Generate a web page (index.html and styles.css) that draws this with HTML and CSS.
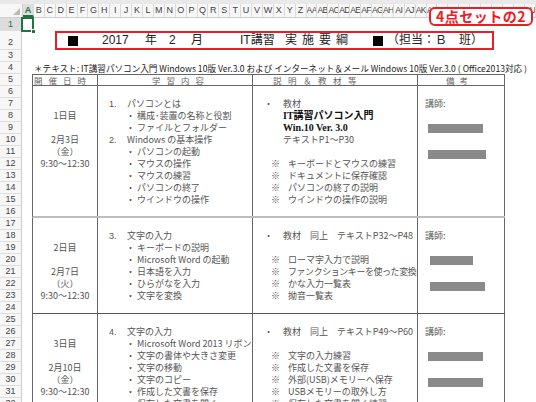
FILE: index.html
```html
<!DOCTYPE html>
<html lang="ja">
<head>
<meta charset="utf-8">
<title>IT講習 実施要綱</title>
<link rel="stylesheet" href="styles.css">
</head>
<body>
<div class="app">
  <div class="topstrip"></div>
  <div class="colhdr">
    <div class="corner"><span class="tri"></span></div>
    <div class="ch sel">A</div><div class="ch">B</div><div class="ch">C</div><div class="ch">D</div><div class="ch">E</div><div class="ch">F</div><div class="ch">G</div><div class="ch">H</div><div class="ch">I</div><div class="ch">J</div><div class="ch">K</div><div class="ch">L</div><div class="ch">M</div><div class="ch">N</div><div class="ch">O</div><div class="ch">P</div><div class="ch">Q</div><div class="ch">R</div><div class="ch">S</div><div class="ch">T</div><div class="ch">U</div><div class="ch">V</div><div class="ch">W</div><div class="ch">X</div><div class="ch">Y</div><div class="ch">Z</div>
    <div class="ch dbl">AA</div><div class="ch dbl">AB</div><div class="ch dbl">AC</div><div class="ch dbl">AD</div><div class="ch dbl">AE</div><div class="ch dbl">AF</div><div class="ch dbl">AG</div><div class="ch dbl">AH</div><div class="ch dbl">AI</div><div class="ch dbl">AJ</div><div class="ch dbl">AK</div><div class="ch dbl">AL</div><div class="ch dbl">AM</div><div class="ch dbl">AN</div><div class="ch dbl">AO</div><div class="ch dbl">AP</div><div class="ch dbl">AQ</div><div class="ch dbl">AR</div><div class="ch dbl">AS</div><div class="ch dbl">AT</div><div class="ch dbl">AU</div>
  </div>
  <div class="main">
    <div class="rowhdr">
      <div class="rh r13 sel">1</div>
      <div class="rh r19">2</div>
      <div class="rh">3</div><div class="rh">4</div><div class="rh">5</div><div class="rh">6</div><div class="rh">7</div><div class="rh">8</div><div class="rh">9</div><div class="rh">10</div>
      <div class="rh">11</div><div class="rh">12</div><div class="rh">13</div><div class="rh">14</div><div class="rh">15</div><div class="rh">16</div><div class="rh">17</div><div class="rh">18</div><div class="rh">19</div><div class="rh">20</div>
      <div class="rh">21</div><div class="rh">22</div><div class="rh">23</div><div class="rh">24</div><div class="rh">25</div><div class="rh">26</div><div class="rh">27</div><div class="rh">28</div><div class="rh">29</div><div class="rh">30</div>
      <div class="rh">31</div><div class="rh">32</div>
    </div>
    <div class="sheet">
      <div class="cellsel"><span class="handle"></span></div>
      <div class="row1"></div>
      <div class="row2">
        <div class="titlebox">
          <span class="t sq"><i class="square"></i></span>
          <span class="t">2017</span>
          <span class="t">年</span>
          <span class="t">2</span>
          <span class="t">月</span>
          <span class="t">IT講習</span>
          <span class="t wide">実施要綱</span>
          <span class="t sq"><i class="square"></i></span>
          <span class="t">（担当：Ｂ　班）</span>
        </div>
      </div>
      <div class="row3"></div>
      <div class="row4">＊テキスト: IT講習パソコン入門 Windows 10版 Ver.3.0 および インターネット＆メール Windows 10版 Ver.3.0 ( Office2013対応 )</div>
      <div class="tbl">
        <div class="tr thead">
          <div class="c c1"><span class="hd h1">開催日時</span></div>
          <div class="c c2"><span class="hd h2">学習内容</span></div>
          <div class="c c3"><span class="hd h3">説明＆教材等</span></div>
          <div class="c c4"><span class="hd h4">備考</span></div>
        </div>

        <div class="tr blk rows11 sep-light">
          <div class="c c1">
            <div class="l"></div><div class="l"></div><div class="l">1日目</div><div class="l"></div>
            <div class="l">2月3日</div><div class="l">（金）</div><div class="l">9:30～12:30</div>
          </div>
          <div class="c c2">
            <div class="l"></div>
            <div class="l n"><span class="no">1.</span>パソコンとは</div>
            <div class="l b">・ 構成･装置の名称と役割</div>
            <div class="l b">・ ファイルとフォルダー</div>
            <div class="l n"><span class="no">2.</span>Windows の基本操作</div>
            <div class="l b">・ パソコンの起動</div>
            <div class="l b">・ マウスの操作</div>
            <div class="l b">・ マウスの練習</div>
            <div class="l b">・ パソコンの終了</div>
            <div class="l b">・ ウインドウの操作</div>
          </div>
          <div class="c c3">
            <div class="l"></div>
            <div class="l dot"><span class="bu">・</span>教材</div>
            <div class="l strong">IT講習パソコン入門</div>
            <div class="l strong serif">Win.10 Ver. 3.0</div>
            <div class="l ind">テキストP1～P30</div>
            <div class="l"></div>
            <div class="l km"><span class="kome">※</span>キーボードとマウスの練習</div>
            <div class="l km"><span class="kome">※</span>ドキュメントに保存確認</div>
            <div class="l km"><span class="kome">※</span>パソコンの終了の説明</div>
            <div class="l km"><span class="kome">※</span>ウインドウの操作の説明</div>
          </div>
          <div class="c c4">
            <div class="l"></div>
            <div class="l lec">講師:</div>
            <div class="l"></div>
            <div class="l"><i class="bar w55"></i></div>
            <div class="l"></div>
            <div class="l"><i class="bar w58"></i></div>
          </div>
        </div>

        <div class="tr blk rows8 sep-dark">
          <div class="c c1">
            <div class="l"></div><div class="l"></div><div class="l">2日目</div><div class="l"></div>
            <div class="l">2月7日</div><div class="l">（火）</div><div class="l">9:30～12:30</div>
          </div>
          <div class="c c2">
            <div class="l"></div>
            <div class="l n"><span class="no">3.</span>文字の入力</div>
            <div class="l b">・ キーボードの説明</div>
            <div class="l b">・ Microsoft Word の起動</div>
            <div class="l b">・ 日本語を入力</div>
            <div class="l b">・ ひらがなを入力</div>
            <div class="l b">・ 文字を変換</div>
          </div>
          <div class="c c3">
            <div class="l"></div>
            <div class="l dot"><span class="bu">・</span>教材　同上　テキストP32～P48</div>
            <div class="l"></div>
            <div class="l km"><span class="kome">※</span>ローマ字入力で説明</div>
            <div class="l km tight"><span class="kome">※</span>ファンクションキーを使った変換</div>
            <div class="l km"><span class="kome">※</span>かな入力一覧表</div>
            <div class="l km"><span class="kome">※</span>拗音一覧表</div>
          </div>
          <div class="c c4">
            <div class="l"></div>
            <div class="l lec">講師:</div>
            <div class="l"></div>
            <div class="l"><i class="bar w43 off"></i></div>
            <div class="l"></div>
            <div class="l"><i class="bar w55 off"></i></div>
          </div>
        </div>

        <div class="tr blk rows8">
          <div class="c c1">
            <div class="l"></div><div class="l"></div><div class="l">3日目</div><div class="l"></div>
            <div class="l">2月10日</div><div class="l">（金）</div><div class="l">9:30～12:30</div>
          </div>
          <div class="c c2">
            <div class="l"></div>
            <div class="l n"><span class="no">4.</span>文字の入力</div>
            <div class="l b">・ Microsoft Word 2013 リボン</div>
            <div class="l b">・ 文字の書体や大きさ変更</div>
            <div class="l b">・ 文字の移動</div>
            <div class="l b">・ 文字のコピー</div>
            <div class="l b">・ 作成した文書を保存</div>
            <div class="l b">・ 保存した文書を開く</div>
          </div>
          <div class="c c3">
            <div class="l"></div>
            <div class="l dot"><span class="bu">・</span>教材　同上　テキストP49～P60</div>
            <div class="l"></div>
            <div class="l km"><span class="kome">※</span>文字の入力練習</div>
            <div class="l km"><span class="kome">※</span>作成した文書を保存</div>
            <div class="l km"><span class="kome">※</span>外部(USB)メモリーへ保存</div>
            <div class="l km"><span class="kome">※</span>USBメモリーの取外し方</div>
            <div class="l km"><span class="kome">※</span>保存した文書を開く練習</div>
          </div>
          <div class="c c4">
            <div class="l"></div>
            <div class="l lec">講師:</div>
            <div class="l"></div>
            <div class="l"><i class="bar w55"></i></div>
            <div class="l"></div>
            <div class="l"><i class="bar w55"></i></div>
          </div>
        </div>
      </div>
    </div>
  </div>
  <div class="badge">4点セットの2</div>
</div>
</body>
</html>
```

FILE: styles.css
```css
* { box-sizing: border-box; }
html, body { margin: 0; padding: 0; }
body {
  width: 536px;
  height: 402px;
  overflow: hidden;
  background: #ffffff;
  font-family: "Noto Sans CJK JP", "Liberation Sans", sans-serif;
  color: #555;
}
.app { position: relative; width: 536px; height: 402px; overflow: hidden; }

.topstrip { height: 4px; background: #e9e9e9; }

.colhdr {
  display: flex;
  height: 14px;
  background: #f7f7f7;
  border-bottom: 1px solid #cfcfcf;
  font-family: "Liberation Sans", sans-serif;
  font-size: 9px;
  color: #444;
}
.corner {
  flex: 0 0 23px;
  position: relative;
  border-right: 1px solid #cfcfcf;
}
.tri {
  position: absolute;
  right: 2px;
  bottom: 2px;
  width: 0;
  height: 0;
  border-left: 7px solid transparent;
  border-bottom: 7px solid #b9b9b9;
}
.ch {
  flex: 0 0 10.92px;
  border-right: 1px solid #dadada;
  text-align: center;
  line-height: 13px;
  overflow: hidden;
  white-space: nowrap;
}
.ch.dbl { letter-spacing: -0.6px; font-size: 8.5px; }
.ch.sel {
  background: #dedede;
  color: #217346;
  font-weight: bold;
  border-bottom: 2px solid #217346;
}

.main { display: flex; }
.rowhdr {
  flex: 0 0 22px;
  background: #f7f7f7;
  border-right: 1px solid #cfcfcf;
  font-family: "Liberation Sans", sans-serif;
  font-size: 9px;
  color: #444;
}
.rh {
  height: 12px;
  line-height: 11px;
  text-align: center;
  border-bottom: 1px solid #dedede;
}
.rh.r13 { height: 13px; line-height: 13px; }
.rh.r19 { height: 19px; line-height: 22px; }
.rh.sel { background: #dcdcdc; color: #217346; }

.sheet { position: relative; flex: 1; }
.cellsel {
  position: absolute;
  left: -1px;
  top: -1px;
  width: 13px;
  height: 15px;
  border: 2px solid #217346;
}
.handle {
  position: absolute;
  right: -4px;
  bottom: -4px;
  width: 5px;
  height: 5px;
  background: #217346;
  border: 1px solid #fff;
}

.row1 { height: 13px; }
.row2 { height: 19px; }
.row3 { height: 12px; }
.row4 {
  height: 12px;
  line-height: 12px;
  padding-left: 12px;
  font-size: 8.6px;
  color: #222;
  white-space: nowrap;
  letter-spacing: 0;
}

.titlebox {
  margin-left: 33px;
  width: 439px;
  height: 19px;
  border: 2px solid #ee1c24;
  display: grid;
  grid-template-columns: 34px 43px 24px 22px 49px 45px 88px 14px auto;
  padding-left: 11px;
  align-items: center;
  font-family: "Liberation Sans", "Noto Sans CJK JP", sans-serif;
  font-size: 12px;
  line-height: 15px;
  color: #222;
  white-space: nowrap;
}
.t.sq { display: flex; align-items: center; }
.square { display: block; width: 10px; height: 10px; background: #000; }
.t.wide { letter-spacing: 5px; }

.tbl { margin-left: 10px; width: 473px; font-size: 9px; }
.tr {
  display: grid;
  grid-template-columns: 65px 155px 165px 87px;
  border-left: 1px solid #666;
  width: 473px;
}
.c {
  border-right: 1px solid #666;
  overflow: hidden;
  white-space: nowrap;
}
.thead { height: 12px; border-top: 1px solid #666; border-bottom: 1px solid #666; }
.thead .c { line-height: 10px; overflow: visible; }
.hd { display: inline-block; color: #666; font-size: 8.5px; }
.h1 { padding-left: 1px; letter-spacing: 6px; }
.h2 { padding-left: 54px; letter-spacing: 6px; }
.h3 { padding-left: 20px; letter-spacing: 6.5px; }
.h4 { padding-left: 28px; letter-spacing: 5px; }

.blk { overflow: hidden; }
.rows11 { height: 132px; }
.rows8 { height: 96px; }
.sep-light { border-bottom: 2px solid #bdbdbd; }
.sep-dark { border-bottom: 1px solid #555; }

.l { height: 12px; line-height: 12px; }
.c1 .l { text-align: center; color: #555; }
.c2 .l, .c3 .l, .c4 .l { color: #555; }
.l.n { padding-left: 11px; }
.no { display: inline-block; width: 18px; font-family: "Liberation Sans", sans-serif; }
.l.b { padding-left: 28px; }
.l.dot { padding-left: 11px; }
.bu { display: inline-block; width: 19px; }
.l.km { padding-left: 18px; }
.l.km.tight { letter-spacing: -0.45px; }
.kome { display: inline-block; width: 17px; }
.l.ind { padding-left: 30px; }
.l.strong {
  padding-left: 30px;
  font-family: "Liberation Serif", "Noto Sans CJK JP", serif;
  font-weight: bold;
  font-size: 10px;
  color: #111;
}
.l.lec { padding-left: 7px; }
.bar { display: block; height: 9px; margin-top: 2px; margin-left: 10px; background: #8a8a8a; }
.bar.off { margin-left: 12px; }
.w43 { width: 43px; }
.w55 { width: 55px; }
.w58 { width: 58px; }

.badge {
  position: absolute;
  left: 429px;
  top: 7px;
  width: 104px;
  height: 19px;
  border: 2px solid #ee1c24;
  border-radius: 6px;
  background: #fff;
  color: #ee1c24;
  font-family: "Noto Sans CJK JP", sans-serif;
  font-weight: bold;
  font-size: 14px;
  line-height: 15px;
  text-align: center;
  letter-spacing: 0.5px;
}
```
